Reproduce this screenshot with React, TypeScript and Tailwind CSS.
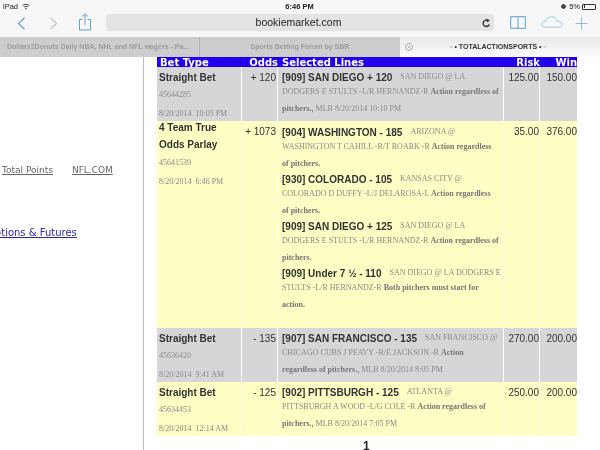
const sans = 'font-["Liberation_Sans",Arial,sans-serif]';
const serif = 'font-["Liberation_Serif","Times_New_Roman",serif]';

type Block = {
  title: string;
  sub: string;
  line2: [string, string?];
  line3: [string, string?];
};

type Bet = {
  type: string[];
  id: string;
  date: string;
  odds: string;
  risk: string;
  win: string;
  gray: boolean;
  height: string;
  blocks: Block[];
};

const bets: Bet[] = [
  {
    type: ['Straight Bet'],
    id: '45644285',
    date: '8/20/2014  10:05 PM',
    odds: '+ 120',
    risk: '125.00',
    win: '150.00',
    gray: true,
    height: 'h-[54px]',
    blocks: [
      {
        title: '[909] SAN DIEGO + 120',
        sub: 'SAN DIEGO @ LA',
        line2: ['DODGERS E STULTS -L/R HERNANDZ-R ', 'Action regardless of'],
        line3: ['', 'pitchers.,'],
      },
    ],
  },
  {
    type: ['4 Team True', 'Odds Parlay'],
    id: '45641539',
    date: '8/20/2014  6:46 PM',
    odds: '+ 1073',
    risk: '35.00',
    win: '376.00',
    gray: false,
    height: 'h-[207px]',
    blocks: [
      {
        title: '[904] WASHINGTON - 185',
        sub: 'ARIZONA @',
        line2: ['WASHINGTON T CAHILL -R/T ROARK -R ', 'Action regardless'],
        line3: ['', 'of pitchers.'],
      },
      {
        title: '[930] COLORADO - 105',
        sub: 'KANSAS CITY @',
        line2: ['COLORADO D DUFFY -L/J DELAROSA-L ', 'Action regardless'],
        line3: ['', 'of pitchers.'],
      },
      {
        title: '[909] SAN DIEGO + 125',
        sub: 'SAN DIEGO @ LA',
        line2: ['DODGERS E STULTS -L/R HERNANDZ-R ', 'Action regardless of'],
        line3: ['', 'pitchers.'],
      },
      {
        title: '[909] Under 7 ½ - 110',
        sub: 'SAN DIEGO @ LA DODGERS E',
        line2: ['STULTS -L/R HERNANDZ-R ', 'Both pitchers must start for'],
        line3: ['', 'action.'],
      },
    ],
  },
  {
    type: ['Straight Bet'],
    id: '45636420',
    date: '8/20/2014  9:41 AM',
    odds: '- 135',
    risk: '270.00',
    win: '200.00',
    gray: true,
    height: 'h-[54px]',
    blocks: [
      {
        title: '[907] SAN FRANCISCO - 135',
        sub: 'SAN FRANCISCO @',
        line2: ['CHICAGO CUBS J PEAVY -R/E JACKSON -R ', 'Action'],
        line3: ['', 'regardless of pitchers.,'],
      },
    ],
  },
  {
    type: ['Straight Bet'],
    id: '45634453',
    date: '8/20/2014  12:14 AM',
    odds: '- 125',
    risk: '250.00',
    win: '200.00',
    gray: false,
    height: 'h-[54px]',
    blocks: [
      {
        title: '[902] PITTSBURGH - 125',
        sub: 'ATLANTA @',
        line2: ['PITTSBURGH A WOOD -L/G COLE -R ', 'Action regardless of'],
        line3: ['', 'pitchers.,'],
      },
    ],
  },
];

const trailing: Record<string, string> = {
  '45644285': ' MLB  8/20/2014 10:10 PM',
  '45636420': ' MLB  8/20/2014 8:05 PM',
  '45634453': ' MLB  8/20/2014 7:05 PM',
};

function StatusBar() {
  return (
    <div className={`flex h-[13px] items-center justify-between pl-[3px] pr-[4px] text-[7.5px] text-[#222] ${sans}`}>
      <div className="flex w-[100px] items-center gap-[4px]">
        <span>iPad</span>
        <svg width="8" height="7" viewBox="0 0 10 8" fill="none" stroke="#333" strokeWidth="1.2">
          <path d="M0.8 3 C3.2 0.6 6.8 0.6 9.2 3" />
          <path d="M2.6 4.7 C4 3.4 6 3.4 7.4 4.7" />
          <path d="M5 7.6 L3.9 6.3 C4.5 5.8 5.5 5.8 6.1 6.3 Z" fill="#333" stroke="none" />
        </svg>
      </div>
      <span className="font-bold">6:46 PM</span>
      <div className="flex w-[100px] items-center justify-end gap-[2px]">
        <span className="mr-[1px] h-[5px] w-[5px] rounded-full border border-[#444] bg-[#444] ring-1 ring-white" />
        <span>5%</span>
        <span className="flex h-[6px] w-[14px] items-center rounded-[1px] border border-[#333] pl-px">
          <span className="h-[3px] w-px bg-[#333]" />
        </span>
      </div>
    </div>
  );
}

function NavBar() {
  return (
    <div className="flex h-[24px] items-start">
      <div className="flex w-[106px] items-start">
        <svg className="ml-[17px] mt-[4px]" width="9" height="13" viewBox="0 0 9 13" fill="none" stroke="#5a9fd8" strokeWidth="1.2">
          <path d="M7.5 0.8 L1.5 6.5 L7.5 12.2" />
        </svg>
        <svg className="ml-[23px] mt-[4px]" width="9" height="13" viewBox="0 0 9 13" fill="none" stroke="#c4c4c4" strokeWidth="1.2">
          <path d="M1.5 0.8 L7.5 6.5 L1.5 12.2" />
        </svg>
        <svg className="ml-[20px]" width="14" height="18" viewBox="0 0 14 18" fill="none" stroke="#5a9fd8" strokeWidth="1">
          <path d="M4.5 6.5 H1.5 V17 H12.5 V6.5 H9.5" />
          <path d="M7 12 V1 M4.2 3.6 L7 0.8 L9.8 3.6" />
        </svg>
      </div>
      <div className={`mt-px flex h-[17px] w-[388px] items-center rounded-[4px] bg-[#e3e3e3] ${sans}`}>
        <span className="flex-1 pl-[9px] text-center text-[10.5px] text-[#222]">bookiemarket.com</span>
        <svg className="mr-[3px]" width="9" height="10" viewBox="0 0 9 10" fill="none" stroke="#333" strokeWidth="1.4">
          <path d="M7.3 6.6 A3.2 3.2 0 1 1 6.2 2.6" />
          <path d="M4.6 0.4 L7.9 2.4 L4.9 4.6 Z" fill="#333" stroke="none" />
        </svg>
      </div>
      <div className="flex items-start">
        <svg className="ml-[16px] mt-[3px]" width="16" height="13" viewBox="0 0 16 13" fill="none" stroke="#5a9fd8" strokeWidth="1">
          <path d="M0.7 0.7 H15.3 V12.3 H0.7 Z M8 0.7 V12.3" />
        </svg>
        <svg className="ml-[15px] mt-[3px]" width="22" height="12" viewBox="0 0 22 12" fill="none" stroke="#8fbfe3" strokeWidth="0.9">
          <path d="M4.5 11.2 C2 11.2 0.6 9.8 0.6 8.2 C0.6 6.4 2.4 5 4.4 5.4 C5.6 2.4 8 0.8 10.6 0.8 C13.6 0.8 15.8 3 16.2 5.4 C18.8 5.2 21.2 6.4 21.2 8.4 C21.2 10.2 19.6 11.2 17.6 11.2 Z" />
        </svg>
        <svg className="ml-[12px] mt-[4px]" width="13" height="13" viewBox="0 0 13 13" fill="none" stroke="#7fb5de" strokeWidth="0.9">
          <path d="M6.5 0.5 V12.5 M0.5 6.5 H12.5" />
        </svg>
      </div>
    </div>
  );
}

function TabBar() {
  return (
    <div className={`flex h-[20px] bg-[#cdcdcd] text-[7px] font-bold ${sans}`}>
      <div className="flex w-[199px] items-center whitespace-nowrap pl-[7px] text-[#9c9c9c]">
        Dollars2Donuts Daily NBA, NHL and NFL wagers - Pa...
      </div>
      <div className="flex w-[201px] items-center justify-center border-l border-[#b4b4b4] text-[#9c9c9c]">
        Sports Betting Forum by SBR
      </div>
      <div className="flex w-[200px] items-center bg-gradient-to-b from-[#e9e9e9] to-[#fbfbfb] text-[#333]">
        <span className="ml-[5px] flex h-[8px] w-[8px] items-center justify-center rounded-full border border-[#aaa] text-[6px] font-normal leading-none text-[#999]">
          ×
        </span>
        <span className="ml-[37px] whitespace-nowrap">
          <span className="text-[#999]">▫</span> • TOTALACTIONSPORTS • <span className="text-[#999]">▫</span>
        </span>
      </div>
    </div>
  );
}

function SideLinks() {
  return (
    <div className="w-[144px] shrink-0 overflow-hidden border-r border-[#bdbdbd] font-['DejaVu_Sans',Verdana,sans-serif] text-[9px]">
      <div className="flex gap-[19px] pl-[2px] pt-[107px] text-[#666]">
        <span className="underline">Total Points</span>
        <span className="underline">NFL.COM</span>
      </div>
      <div className="-ml-[13px] mt-[47px] whitespace-nowrap text-[10px] text-[#2a2aa8] underline">Options &amp; Futures</div>
    </div>
  );
}

function TableHeader() {
  return (
    <div className="grid h-[10px] grid-cols-[85px_36px_226px_36px_37px] items-end overflow-hidden bg-[#2200ee] pr-[1px] font-['DejaVu_Sans',Verdana,sans-serif] text-[10px] font-bold leading-[12px] text-white">
      <span className="pl-[3px]">Bet Type</span>
      <span className="-ml-[3px] whitespace-nowrap text-right">Odds</span>
      <span className="pl-[4px]">Selected Lines</span>
      <span className="text-right">Risk</span>
      <span className="text-right">Win</span>
    </div>
  );
}

function Selection({ block, extra }: { block: Block; extra?: string }) {
  return (
    <div className="whitespace-nowrap">
      <div className="flex h-[14px] items-center">
        <span className={`text-[10px] font-bold text-[#333] ${sans}`}>{block.title}</span>
        <span className={`ml-[8px] text-[8px] text-[#8a8a8a] ${serif}`}>{block.sub}</span>
      </div>
      <div className={`h-[18px] text-[8px] leading-[15px] text-[#8a8a8a] ${serif}`}>
        {block.line2[0]}
        <b className="text-[#777]">{block.line2[1]}</b>
      </div>
      <div className={`h-[15px] text-[8px] leading-[14px] text-[#8a8a8a] ${serif}`}>
        <b className="text-[#777]">{block.line3[1]}</b>
        {extra}
      </div>
    </div>
  );
}

function BetRow({ bet }: { bet: Bet }) {
  const cell = bet.gray ? 'bg-[#d6d6d9]' : 'bg-[#fdfdc4]';
  const num = `pt-[4px] text-right text-[10px] leading-[14px] text-[#333] ${sans} ${cell}`;
  const parlay = bet.type.length > 1;
  return (
    <div className={`grid ${bet.height} grid-cols-[84px_35px_225px_35px_37px] gap-x-px ${bet.gray ? 'bg-white' : 'bg-[#feffe2]'}`}>
      <div className={`pl-[2px] ${parlay ? 'pt-px' : 'pt-[5px]'} ${cell}`}>
        {bet.type.map((t) => (
          <div key={t} className={`${parlay ? 'h-[17px]' : 'h-[16px]'} text-[10px] font-bold leading-[12px] text-[#333] ${sans}`}>
            {t}
          </div>
        ))}
        <div className={`h-[18px] text-[8px] leading-[14px] text-[#8a8a8a] ${serif}`}>{bet.id}</div>
        <div className={`whitespace-pre pt-[1px] text-[8px] leading-[14px] text-[#8a8a8a] ${serif}`}>{bet.date}</div>
      </div>
      <div className={`whitespace-nowrap pr-px ${num}`}>{bet.odds}</div>
      <div className={`overflow-hidden pl-[4px] ${parlay ? 'pt-[4px]' : 'pt-[3px]'} ${cell}`}>
        {bet.blocks.map((b) => (
          <Selection key={b.title} block={b} extra={trailing[bet.id]} />
        ))}
      </div>
      <div className={num}>{bet.risk}</div>
      <div className={num}>{bet.win}</div>
    </div>
  );
}

export default function App() {
  return (
    <div className="h-[450px] w-[600px] overflow-hidden bg-white blur-[0.4px]">
      <div className="bg-[#f7f7f7]">
        <StatusBar />
        <NavBar />
      </div>
      <TabBar />
      <div className="flex h-[393px]">
        <SideLinks />
        <div className="ml-[13px] w-[420px]">
          <TableHeader />
          {bets.map((bet) => (
            <BetRow key={bet.id} bet={bet} />
          ))}
          <div className={`-mt-[1px] pt-[2px] pl-[206px] text-[12px] font-bold text-[#222] ${sans}`}>1</div>
        </div>
      </div>
    </div>
  );
}
